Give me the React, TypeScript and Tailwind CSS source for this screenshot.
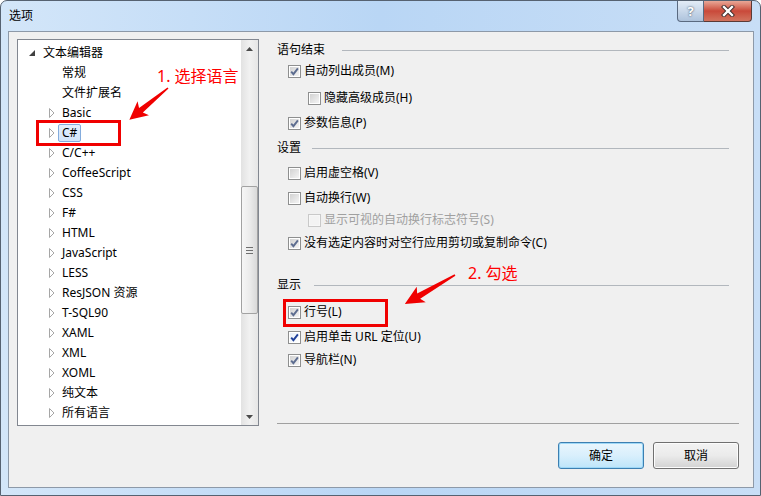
import type { ReactNode } from 'react'

// 语言列表（文本编辑器下的子节点）
const languages: { label: string; leaf?: boolean; selected?: boolean }[] = [
  { label: '常规', leaf: true },
  { label: '文件扩展名', leaf: true },
  { label: 'Basic' },
  { label: 'C#', selected: true },
  { label: 'C/C++' },
  { label: 'CoffeeScript' },
  { label: 'CSS' },
  { label: 'F#' },
  { label: 'HTML' },
  { label: 'JavaScript' },
  { label: 'LESS' },
  { label: 'ResJSON 资源' },
  { label: 'T-SQL90' },
  { label: 'XAML' },
  { label: 'XML' },
  { label: 'XOML' },
  { label: '纯文本' },
  { label: '所有语言' },
]

function Collapsed() {
  return (
    <svg width="6" height="10" viewBox="0 0 6 10">
      <polygon points="0.5,0.5 5,5 0.5,9.5" fill="#fff" stroke="#a6a6a6" strokeWidth="1" />
    </svg>
  )
}

function Expanded() {
  return (
    <svg width="6" height="6" viewBox="0 0 6 6">
      <polygon points="6,0 6,6 0,6" fill="#404040" />
    </svg>
  )
}

function ScrollBar() {
  return (
    <div className="flex w-[17px] flex-col bg-gradient-to-r from-[#e2e2e2] via-[#f1f1f1] to-[#e6e6e6]">
      <div className="flex h-[17px] items-center justify-center">
        <svg width="7" height="4" viewBox="0 0 7 4">
          <polygon points="3.5,0 7,4 0,4" fill="#4a4a4a" />
        </svg>
      </div>
      <div className="h-[129px]" />
      <div className="flex h-[128px] flex-col items-center justify-center gap-[2px] rounded-[2px] border border-[#a2a2a2] bg-gradient-to-r from-[#f6f6f6] via-[#ececec] to-[#d9d9d9]">
        <span className="h-px w-[7px] bg-[#6f6f6f]" />
        <span className="h-px w-[7px] bg-[#6f6f6f]" />
        <span className="h-px w-[7px] bg-[#6f6f6f]" />
      </div>
      <div className="flex-1" />
      <div className="flex h-[17px] items-center justify-center">
        <svg width="7" height="4" viewBox="0 0 7 4">
          <polygon points="0,0 7,0 3.5,4" fill="#4a4a4a" />
        </svg>
      </div>
    </div>
  )
}

function TreePane() {
  return (
    <div className="flex h-[387px] w-[242px] border border-[#828790] bg-white text-black">
      <div className="flex-1 overflow-hidden pt-[3px]">
        <div className="flex h-[20px] items-center pl-[11px]">
          <span className="flex w-[14px] items-center">
            <Expanded />
          </span>
          <span>文本编辑器</span>
        </div>
        {languages.map((item) => (
          <div key={item.label} className="flex h-[20px] items-center pl-[31px]">
            <span className="flex w-[13px] items-center">{!item.leaf && <Collapsed />}</span>
            {item.selected ? (
              <span className="-ml-[4px] flex h-[18px] items-center rounded-[2px] border border-[#84acdd] bg-gradient-to-b from-[#e4effc] to-[#d3e5fa] px-[3px]">
                {item.label}
              </span>
            ) : (
              <span className="whitespace-nowrap">{item.label}</span>
            )}
          </div>
        ))}
      </div>
      <ScrollBar />
    </div>
  )
}

function CheckBox({ checked, disabled, focus }: { checked?: boolean; disabled?: boolean; focus?: boolean }) {
  return (
    <span
      className={`flex h-[13px] w-[13px] shrink-0 items-center justify-center border ${
        disabled ? 'border-[#c9c9c9] bg-[#f7f7f7]' : 'border-[#8e8f8f] bg-white'
      }`}
    >
      <span
        className={`relative flex h-[9px] w-[9px] items-center justify-center ${
          disabled
            ? 'bg-[#f3f3f3]'
            : focus
              ? 'bg-gradient-to-br from-[#e6eef8] to-[#ffffff]'
              : 'bg-gradient-to-br from-[#d2d2d2] to-[#f4f4f4]'
        }`}
      >
        {checked && (
          <svg width="11" height="11" viewBox="0 0 11 11" className="absolute -left-px -top-px">
            <path
              d="M2.2 5.6 L4.4 8.2 L8.9 2.3"
              fill="none"
              stroke={focus ? '#1d3f99' : '#5d6d90'}
              strokeWidth="1.9"
            />
          </svg>
        )}
      </span>
    </span>
  )
}

function Option({
  label,
  checked,
  disabled,
  focus,
  indent,
  className,
}: {
  label: string
  checked?: boolean
  disabled?: boolean
  focus?: boolean
  indent?: boolean
  className: string
}) {
  return (
    <div className={`flex h-[20px] items-center gap-[3px] ${indent ? 'pl-[31px]' : 'pl-[11px]'} ${className}`}>
      <CheckBox checked={checked} disabled={disabled} focus={focus} />
      <span className={`whitespace-nowrap ${disabled ? 'text-[#a0a0a0]' : 'text-black'}`}>{label}</span>
    </div>
  )
}

function GroupHeader({ title, className, lineClass }: { title: string; className: string; lineClass: string }) {
  return (
    <div className={`flex h-[20px] items-center pr-[10px] ${className}`}>
      <span className="text-black">{title}</span>
      <span className={`h-px flex-1 bg-[#b2b7bd] ${lineClass}`} />
    </div>
  )
}

function SettingsPane() {
  return (
    <div className="ml-[18px] flex h-[387px] w-[462px] flex-col">
      <GroupHeader title="语句结束" className="mt-[1px]" lineClass="ml-[17px]" />
      <Option label="自动列出成员(M)" checked className="mt-[1px]" />
      <Option label="隐藏高级成员(H)" indent className="mt-[7px]" />
      <Option label="参数信息(P)" checked className="mt-[5px]" />
      <GroupHeader title="设置" className="mt-[5px]" lineClass="ml-[11px]" />
      <Option label="启用虚空格(V)" className="mt-[5px]" />
      <Option label="自动换行(W)" className="mt-[5px]" />
      <Option label="显示可视的自动换行标志符号(S)" indent disabled className="mt-[2px]" />
      <Option label="没有选定内容时对空行应用剪切或复制命令(C)" checked className="mt-[3px]" />
      <GroupHeader title="显示" className="mt-[22px]" lineClass="ml-[13px]" />
      <Option label="行号(L)" checked className="mt-[7px]" />
      <Option label="启用单击 URL 定位(U)" checked focus className="mt-[5px]" />
      <Option label="导航栏(N)" checked className="mt-[3px]" />
      <div className="mt-auto mb-[2px] h-px bg-[#a0a0a0]" />
    </div>
  )
}

function DialogButton({ children, primary }: { children: ReactNode; primary?: boolean }) {
  return (
    <button
      className={`flex h-[27px] w-[86px] items-center justify-center rounded-[3px] border text-black ${
        primary
          ? 'border-[#3c7fb1] bg-gradient-to-b from-[#e9f6fd] via-[#d9effc] to-[#bde5fa] shadow-[inset_0_0_0_1px_#9ed8f7]'
          : 'border-[#707070] bg-gradient-to-b from-[#f3f3f3] via-[#ebebeb] to-[#d2d2d2] shadow-[inset_0_0_0_1px_#fcfcfc]'
      }`}
    >
      {children}
    </button>
  )
}

function Annotations() {
  return (
    <div className="pointer-events-none absolute inset-0">
      <div className="absolute left-[35px] top-[119px] h-[26px] w-[85px] border-[3px] border-[#f00000]" />
      <div className="absolute left-[282px] top-[298px] h-[28px] w-[105px] border-[3px] border-[#f00000]" />
      <span className="absolute left-[156px] top-[64px] whitespace-nowrap text-[16px] leading-[22px] text-[#ff0000]">
        1. 选择语言
      </span>
      <span className="absolute left-[467px] top-[261px] whitespace-nowrap text-[16px] leading-[22px] text-[#ff0000]">
        2. 勾选
      </span>
      <svg width="761" height="496" className="absolute left-0 top-0">
        {/* 指向 C# 的箭头 */}
        <polygon
          transform="translate(167 87) rotate(140.6)"
          points="0,-0.8 35,-3 32,-9 50,0 32,9 35,3 0,0.8"
          fill="#f00000"
        />
        {/* 指向行号的箭头 */}
        <polygon
          transform="translate(454 274) rotate(149.9)"
          points="0,-0.8 42,-3 39,-9 58,0 39,9 42,3 0,0.8"
          fill="#f00000"
        />
      </svg>
    </div>
  )
}

export default function App() {
  return (
    <div className="relative h-[496px] w-[761px] overflow-hidden rounded-t-[7px] border border-[#566271] bg-gradient-to-r from-[#d3e6f9] via-[#b9d6f5] to-[#c8def6] font-['Noto_Sans','Noto_Sans_CJK_SC',sans-serif] text-[12px]">
      {/* 标题栏 */}
      <div className="flex h-[30px] items-start justify-between">
        <span className="mt-[6px] pl-[8px] text-[12px] leading-[18px] text-black">选项</span>
        <div className="mr-[8px] flex">
          <div className="flex h-[21px] w-[27px] items-center justify-center rounded-bl-[4px] border border-t-0 border-[#5a6a80] bg-gradient-to-b from-[#e3ecf6] via-[#c9d8ea] to-[#aec3dc] text-[13px] font-bold leading-none text-white [text-shadow:0_0_2px_#1f2f44]">
            ?
          </div>
          <div className="flex h-[21px] w-[48px] items-center justify-center rounded-br-[4px] border border-l-0 border-t-0 border-[#5a3a36] bg-gradient-to-b from-[#e8a797] via-[#c9493a] to-[#d1735e]">
            <svg width="14" height="12" viewBox="0 0 14 12">
              <path d="M3 2 L11 10 M11 2 L3 10" stroke="#3a2a2a" strokeWidth="4.2" strokeLinecap="square" />
              <path d="M3 2 L11 10 M11 2 L3 10" stroke="#fff" strokeWidth="2.4" strokeLinecap="square" />
            </svg>
          </div>
        </div>
      </div>

      {/* 客户区 */}
      <div className="ml-[7px] mr-[6px] flex h-[457px] flex-col border border-[#8d99a8] bg-[#f0f0f0]">
        <div className="flex pl-[8px] pt-[7px]">
          <TreePane />
          <SettingsPane />
        </div>
        <div className="mt-[16px] flex justify-end gap-[9px] pr-[14px]">
          <DialogButton primary>确定</DialogButton>
          <DialogButton>取消</DialogButton>
        </div>
      </div>

      <Annotations />
    </div>
  )
}
